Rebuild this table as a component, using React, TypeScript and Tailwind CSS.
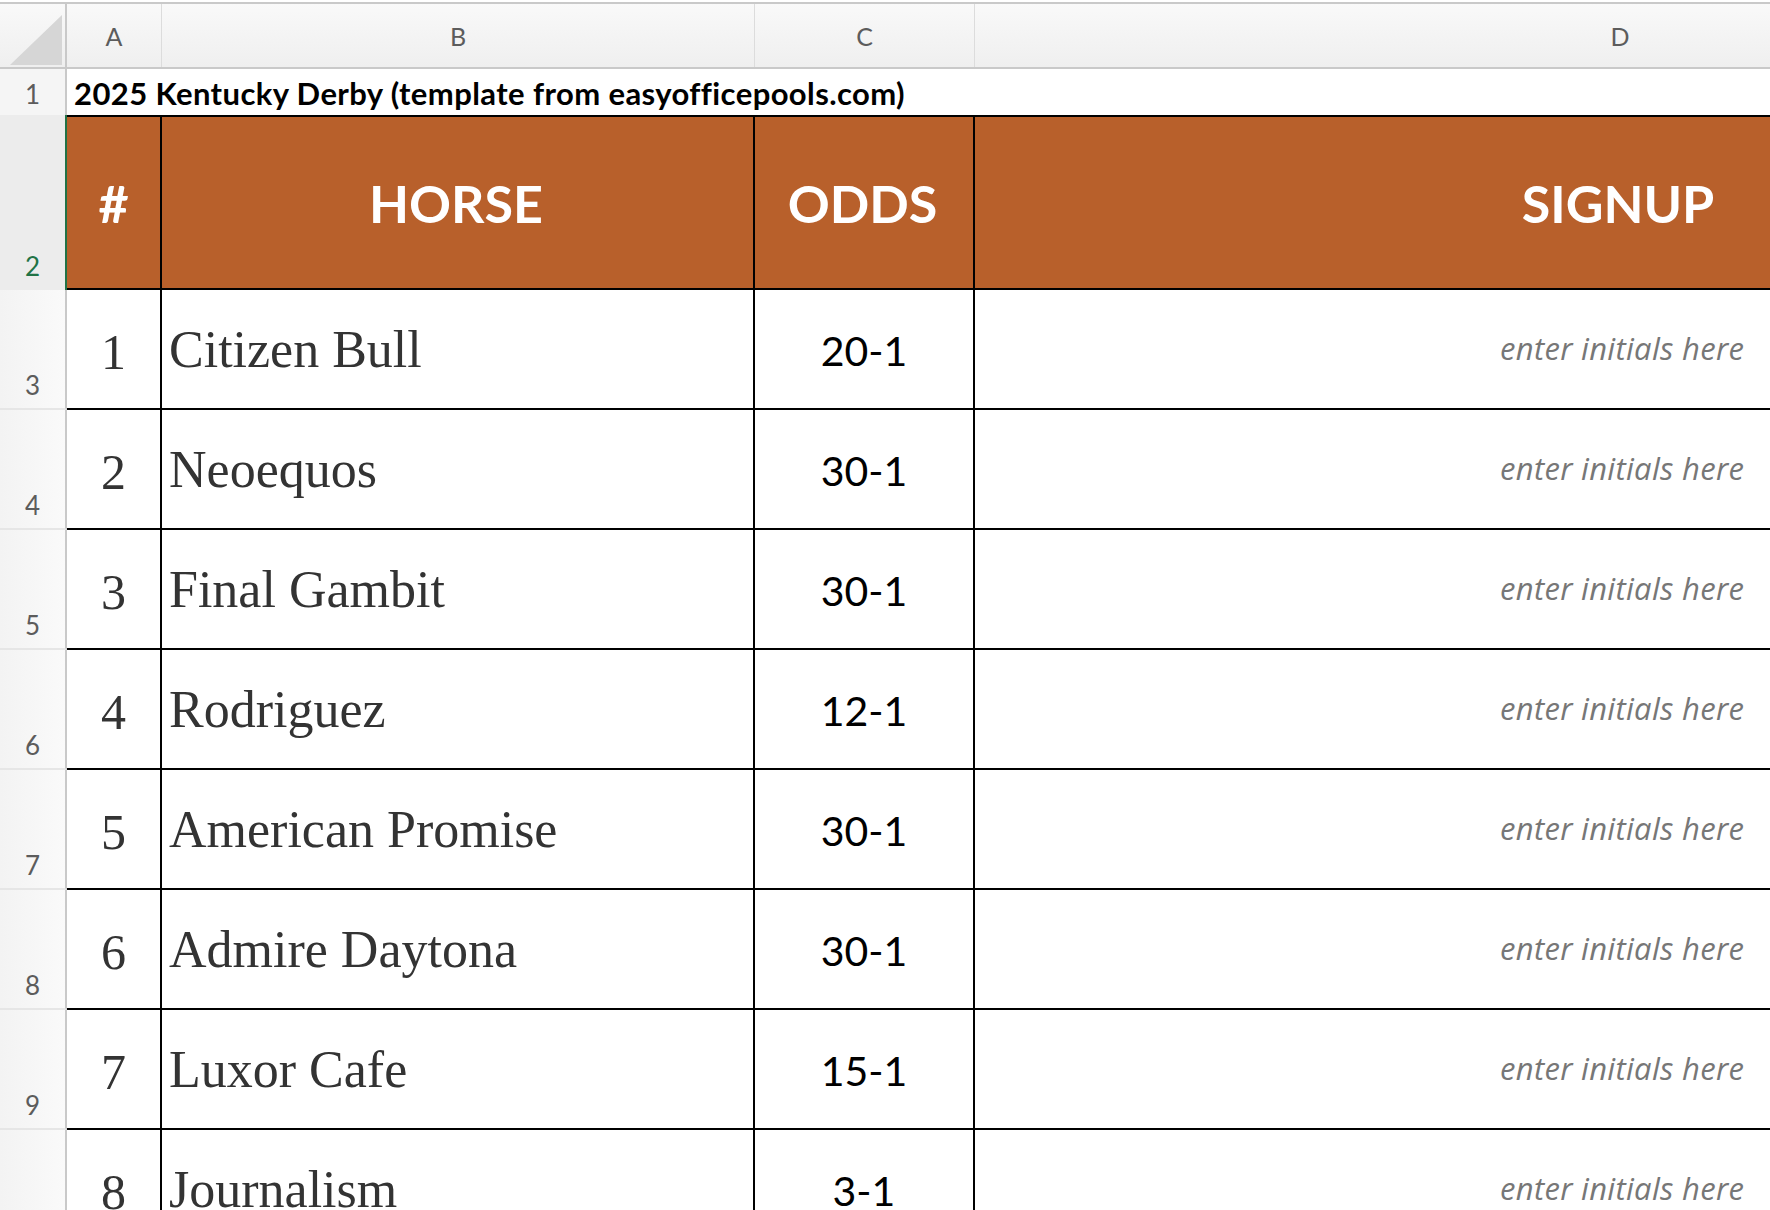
import React from 'react'

const horses = [
    { n: '1', name: 'Citizen Bull', odds: '20-1' },
    { n: '2', name: 'Neoequos', odds: '30-1' },
    { n: '3', name: 'Final Gambit', odds: '30-1' },
    { n: '4', name: 'Rodriguez', odds: '12-1' },
    { n: '5', name: 'American Promise', odds: '30-1' },
    { n: '6', name: 'Admire Daytona', odds: '30-1' },
    { n: '7', name: 'Luxor Cafe', odds: '15-1' },
    { n: '8', name: 'Journalism', odds: '3-1' },
]

const sans = { fontFamily: 'Lato, "Open Sans", sans-serif' }
const serif = { fontFamily: '"Liberation Serif", serif' }

export default function App() {
    return (
        <div className="w-[1770px] h-[1210px] overflow-hidden bg-white" style={sans}>
            {/* column letters */}
            <div className="flex h-[69px] pt-[2px] bg-white">
                <div className="flex w-full border-t-2 border-b-2 border-[#c9c9c9] bg-gradient-to-b from-[#f9f9f9] to-[#efefef]">
                    <div className="relative w-[67px] shrink-0 border-r-2 border-[#c9c9c9]">
                        <svg className="absolute left-[10px] top-[11px]" width="52" height="50" viewBox="0 0 52 50">
                            <polygon points="52,0 52,50 0,50" fill="#d6d6d6" />
                        </svg>
                    </div>
                    <div className="w-[95px] shrink-0 flex items-center justify-center pt-[2px] border-r border-[#dcdcdc] text-[25px] text-[#5c5c5c]">A</div>
                    <div className="w-[593px] shrink-0 flex items-center justify-center pt-[2px] border-r border-[#dcdcdc] text-[25px] text-[#5c5c5c]">B</div>
                    <div className="w-[220px] shrink-0 flex items-center justify-center pt-[2px] border-r border-[#dcdcdc] text-[25px] text-[#5c5c5c]">C</div>
                    <div className="w-[1290px] shrink-0 flex items-center justify-center pt-[2px] text-[25px] text-[#5c5c5c]">D</div>
                </div>
            </div>

            {/* row 1 title */}
            <div className="flex h-[46px]">
                <div className="w-[67px] shrink-0 flex items-center justify-center pt-[4px] border-r-2 border-[#c9c9c9] bg-[#f5f5f5] text-[26px] text-[#5c5c5c]">1</div>
                <div className="flex items-center pl-[7px] pt-[2px] text-[31px] tracking-[0.4px] font-bold text-black whitespace-nowrap">
                    2025 Kentucky Derby (template from easyofficepools.com)
                </div>
            </div>

            {/* row 2 header */}
            <div className="flex h-[175px]">
                <div className="w-[67px] shrink-0 flex items-end justify-center pb-[4px] border-r-2 border-[#217346] bg-[#ececec] text-[26px] text-[#217346]">2</div>
                <div className="flex flex-1 bg-[#b8602b] border-t-2 border-b-2 border-black text-white font-bold text-[52px]">
                    <div className="w-[95px] shrink-0 flex items-center justify-center border-r-2 border-black">#</div>
                    <div className="w-[593px] shrink-0 flex items-center justify-center pr-[3px] border-r-2 border-black">HORSE</div>
                    <div className="w-[220px] shrink-0 flex items-center justify-center pr-[3px] border-r-2 border-black">ODDS</div>
                    <div className="w-[1290px] shrink-0 flex items-center justify-center pr-[4px]">SIGNUP</div>
                </div>
            </div>

            {/* data rows */}
            {horses.map((h, i) => (
                <div key={h.n} className="flex h-[120px]">
                    <div className="w-[67px] shrink-0 flex items-end justify-center pb-[3px] border-r-2 border-[#c9c9c9] border-b-2 border-b-[#e6e6e6] bg-gradient-to-r from-[#f3f3f3] to-[#fafafa] text-[26px] text-[#5c5c5c]">
                        {i + 3}
                    </div>
                    <div className="flex flex-1 border-b-2 border-black">
                        <div className="w-[95px] shrink-0 flex items-center justify-center pt-[6px] border-r-2 border-black text-[50px] text-[#333333]" style={serif}>
                            {h.n}
                        </div>
                        <div className="w-[593px] shrink-0 flex items-center pl-[7px] pt-[2px] border-r-2 border-black text-[52px] text-[#333333] whitespace-nowrap" style={serif}>
                            {h.name}
                        </div>
                        <div className="w-[220px] shrink-0 flex items-center justify-center pt-[4px] border-r-2 border-black text-[41px] text-black">
                            {h.odds}
                        </div>
                        <div
                            className="w-[1290px] shrink-0 flex items-center pl-[525px] pb-[2px] text-[31px] tracking-[0.3px] italic text-[#777777] whitespace-nowrap"
                            style={{ fontFamily: '"Open Sans", Lato, sans-serif' }}
                        >
                            enter initials here
                        </div>
                    </div>
                </div>
            ))}
        </div>
    )
}
